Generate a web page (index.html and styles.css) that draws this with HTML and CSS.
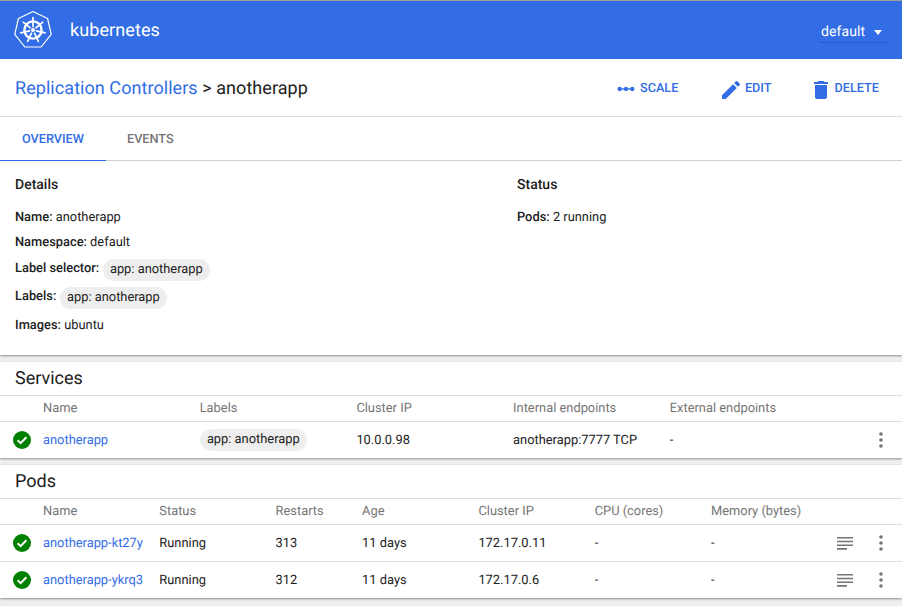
FILE: index.html
```html
<!DOCTYPE html>
<html lang="en">
<head>
    <meta charset="UTF-8">
    <title>Replication Controllers - anotherapp</title>
    <link rel="stylesheet" href="styles.css">
</head>
<body>
    <header class="topbar">
        <div class="brand">
            <svg class="logo" viewBox="0 0 40 40" width="40" height="40">
                <path d="M20 1.5 34.6 8.5 38.2 24.3 28.1 37H11.9L1.8 24.3 5.4 8.5Z" fill="none" stroke="#fff" stroke-width="1.2" stroke-linejoin="round"/>
                <circle cx="20" cy="20" r="8.6" fill="none" stroke="#fff" stroke-width="2.4"/>
                <circle cx="20" cy="20" r="2" fill="#fff"/>
                <g stroke="#fff" stroke-width="1.7" stroke-linecap="round">
                    <path d="M20 7.5V16.5"/>
                    <path d="M29.8 12.2 22.8 17.8"/>
                    <path d="M32.2 22.8 23.4 20.8"/>
                    <path d="M25.4 31.3 21.5 23.2"/>
                    <path d="M14.6 31.3 18.5 23.2"/>
                    <path d="M7.8 22.8 16.6 20.8"/>
                    <path d="M10.2 12.2 17.2 17.8"/>
                </g>
            </svg>
            <span class="brand-name">kubernetes</span>
        </div>
        <div class="ns-select">
            <span>default</span>
            <span class="caret"></span>
        </div>
    </header>

    <div class="actionbar">
        <div class="crumbs"><a href="#">Replication Controllers</a> &gt; anotherapp</div>
        <div class="actions">
            <a class="action action-scale" href="#">
                <svg viewBox="0 0 20 8" width="18" height="8"><path d="M1 4H19" stroke="#326de6" stroke-width="1.5"/><circle cx="3" cy="4" r="2.4" fill="#326de6"/><circle cx="10" cy="4" r="2.4" fill="#326de6"/><circle cx="17" cy="4" r="2.4" fill="#326de6"/></svg>
                SCALE
            </a>
            <a class="action action-edit" href="#">
                <svg class="action-icon" viewBox="0 0 24 24" width="24" height="24"><path fill="#326de6" d="M3 17.25V21h3.75L17.81 9.94l-3.75-3.75L3 17.25zM20.71 7.04a1 1 0 0 0 0-1.41l-2.34-2.34a1 1 0 0 0-1.41 0l-1.83 1.83 3.75 3.75 1.83-1.83z"/></svg>
                EDIT
            </a>
            <a class="action action-delete" href="#">
                <svg class="action-icon" viewBox="0 0 24 24" width="24" height="24"><path fill="#326de6" d="M6 19c0 1.1.9 2 2 2h8c1.1 0 2-.9 2-2V7H6v12zM19 4h-3.5l-1-1h-5l-1 1H5v2h14V4z"/></svg>
                DELETE
            </a>
        </div>
    </div>

    <nav class="tabs">
        <a class="tab tab-active" href="#">OVERVIEW</a>
        <a class="tab" href="#">EVENTS</a>
    </nav>

    <section class="details">
        <div class="details-col">
            <h3>Details</h3>
            <div class="prop"><b>Name:</b> anotherapp</div>
            <div class="prop prop-before-chip"><b>Namespace:</b> default</div>
            <div class="prop prop-chip"><b>Label selector:</b> <span class="chip">app: anotherapp</span></div>
            <div class="prop prop-chip prop-chip-last"><b>Labels:</b> <span class="chip">app: anotherapp</span></div>
            <div class="prop"><b>Images:</b> ubuntu</div>
        </div>
        <div class="details-col">
            <h3>Status</h3>
            <div class="prop"><b>Pods:</b> 2 running</div>
        </div>
    </section>

    <section class="card">
        <h2>Services</h2>
        <div class="row row-head services-cols">
            <span></span><span>Name</span><span>Labels</span><span>Cluster IP</span><span>Internal endpoints</span><span>External endpoints</span><span></span>
        </div>
        <div class="row services-cols">
            <svg class="ok" viewBox="0 0 18 18" width="18" height="18"><circle cx="9" cy="9" r="9" fill="#008000"/><path d="M4.6 9.3 7.6 12.2 13.4 6.2" fill="none" stroke="#fff" stroke-width="2"/></svg>
            <a href="#">anotherapp</a>
            <span><span class="chip">app: anotherapp</span></span>
            <span>10.0.0.98</span>
            <span>anotherapp:7777 TCP</span>
            <span>-</span>
            <svg class="more" viewBox="0 0 4 16" width="4" height="16"><circle cx="2" cy="2" r="1.8"/><circle cx="2" cy="8" r="1.8"/><circle cx="2" cy="14" r="1.8"/></svg>
        </div>
    </section>

    <section class="card">
        <h2>Pods</h2>
        <div class="row row-head pods-cols">
            <span></span><span>Name</span><span>Status</span><span>Restarts</span><span>Age</span><span>Cluster IP</span><span>CPU (cores)</span><span>Memory (bytes)</span><span></span><span></span>
        </div>
        <div class="row pods-cols">
            <svg class="ok" viewBox="0 0 18 18" width="18" height="18"><circle cx="9" cy="9" r="9" fill="#008000"/><path d="M4.6 9.3 7.6 12.2 13.4 6.2" fill="none" stroke="#fff" stroke-width="2"/></svg>
            <a href="#">anotherapp-kt27y</a>
            <span>Running</span>
            <span>313</span>
            <span>11 days</span>
            <span>172.17.0.11</span>
            <span>-</span>
            <span>-</span>
            <svg class="logs" viewBox="0 0 16 13" width="16" height="13"><path d="M0 0h16v1.6H0zM0 3.7h16v1.6H0zM0 7.4h16V9H0zM0 11.1h10v1.6H0z"/></svg>
            <svg class="more" viewBox="0 0 4 16" width="4" height="16"><circle cx="2" cy="2" r="1.8"/><circle cx="2" cy="8" r="1.8"/><circle cx="2" cy="14" r="1.8"/></svg>
        </div>
        <div class="row pods-cols">
            <svg class="ok" viewBox="0 0 18 18" width="18" height="18"><circle cx="9" cy="9" r="9" fill="#008000"/><path d="M4.6 9.3 7.6 12.2 13.4 6.2" fill="none" stroke="#fff" stroke-width="2"/></svg>
            <a href="#">anotherapp-ykrq3</a>
            <span>Running</span>
            <span>312</span>
            <span>11 days</span>
            <span>172.17.0.6</span>
            <span>-</span>
            <span>-</span>
            <svg class="logs" viewBox="0 0 16 13" width="16" height="13"><path d="M0 0h16v1.6H0zM0 3.7h16v1.6H0zM0 7.4h16V9H0zM0 11.1h10v1.6H0z"/></svg>
            <svg class="more" viewBox="0 0 4 16" width="4" height="16"><circle cx="2" cy="2" r="1.8"/><circle cx="2" cy="8" r="1.8"/><circle cx="2" cy="14" r="1.8"/></svg>
        </div>
    </section>
</body>
</html>
```

FILE: styles.css
```css
* {
    box-sizing: border-box;
}
html, body {
    height: 100%;
}
body {
    margin: 0;
    overflow: hidden;
    background: #eeeeee;
    color: #212121;
    font-family: Roboto, "Liberation Sans", sans-serif;
    font-size: 13px;
    text-rendering: geometricPrecision;
}
a {
    color: #326de6;
    text-decoration: none;
}

/* top blue bar */
.topbar {
    height: 59px;
    border-top: 1px solid #9e9e9e;
    background: #326de6;
    color: #fff;
    display: flex;
    align-items: center;
    justify-content: space-between;
    padding: 0 12px 0 13px;
}
.brand {
    display: flex;
    align-items: center;
    gap: 17px;
}
.brand-name {
    font-size: 18px;
    letter-spacing: 0.1px;
}
.ns-select {
    width: 71px;
    height: 24px;
    border-bottom: 1px solid #2a5cc4;
    font-size: 14px;
    letter-spacing: 0.1px;
    display: flex;
    align-items: center;
    justify-content: space-between;
    padding: 2px 8px 0 2px;
    margin-top: 2px;
}
.caret {
    width: 0;
    height: 0;
    border-left: 4.5px solid transparent;
    border-right: 4.5px solid transparent;
    border-top: 5px solid #fff;
    margin-top: 2px;
}

/* breadcrumb and actions */
.actionbar {
    height: 58px;
    background: #fff;
    border-bottom: 1px solid #dddddd;
    display: flex;
    align-items: center;
    justify-content: space-between;
    padding: 2px 23px 0 15px;
}
.crumbs {
    font-size: 18px;
    letter-spacing: 0.06px;
}
.actions {
    display: flex;
    align-items: center;
}
.action {
    display: flex;
    align-items: center;
    font-size: 12.7px;
    font-weight: 500;
    gap: 4.5px;
}
.action-icon {
    margin-top: 3px;
}
.action-edit {
    margin-left: 41px;
    gap: 1.5px;
}
.action-delete {
    margin-left: 37px;
    gap: 2px;
}

/* tabs */
.tabs {
    height: 44px;
    background: #fff;
    border-bottom: 1px solid #d6d6d6;
    display: flex;
}
.tab {
    padding: 1px 21px 0;
    line-height: 44px;
    font-size: 12.7px;
    font-weight: 500;
    color: #757575;
    height: 44px;
    margin-bottom: -1px;
}
.tab-active {
    width: 106px;
    padding: 1px 22px 0;
    color: #326de6;
    border-bottom: 1px solid #326de6;
}

/* details block */
.details {
    height: 194px;
    background: #fff;
    padding: 16px 15px 0;
    display: grid;
    grid-template-columns: 502px 1fr;
    box-shadow: 0 1px 2px rgba(0, 0, 0, 0.4);
    margin-bottom: 7px;
}
.details h3 {
    margin: 0 0 16px;
    font-size: 14px;
    font-weight: 500;
    line-height: 17px;
}
.prop {
    font-size: 12.87px;
    line-height: 15px;
    margin-bottom: 10px;
}
.prop b {
    font-weight: 500;
}
.prop-before-chip {
    margin-bottom: 11px;
}
.prop-chip {
    display: flex;
    align-items: center;
    gap: 3.5px;
    height: 15px;
    margin-bottom: 13px;
}
.prop-chip-last {
    margin-bottom: 14px;
}
.prop-chip .chip {
    margin-top: 2px;
    flex: none;
}
.chip {
    display: inline-block;
    height: 22px;
    line-height: 22px;
    padding: 0 7.2px;
    border-radius: 11px;
    background: #eeeeee;
    font-size: 12.87px;
}

/* tables */
.card {
    background: #fff;
    box-shadow: 0 1px 2px rgba(0, 0, 0, 0.4);
    margin-bottom: 7px;
}
.card h2 {
    margin: 0;
    height: 33px;
    line-height: 34px;
    padding-left: 15px;
    font-size: 18px;
    font-weight: 400;
}
.row {
    display: grid;
    align-items: center;
    height: 37px;
    border-top: 1px solid #dddddd;
    font-size: 12.87px;
}
.row-head {
    height: 26px;
    color: #757575;
}
.row > :first-child {
    margin-left: 13px;
}
.services-cols {
    grid-template-columns: 43px repeat(4, 156.7px) 1fr 32px;
}
.pods-cols {
    grid-template-columns: 43px 116.3px 116.3px 86.5px 116.3px 116.3px 116.3px 1fr 45px 32px;
}
.ok {
    display: block;
}
.more, .logs {
    fill: #757575;
}
.more {
    margin-left: 9px;
}
.logs {
    margin-left: 12px;
}
```
